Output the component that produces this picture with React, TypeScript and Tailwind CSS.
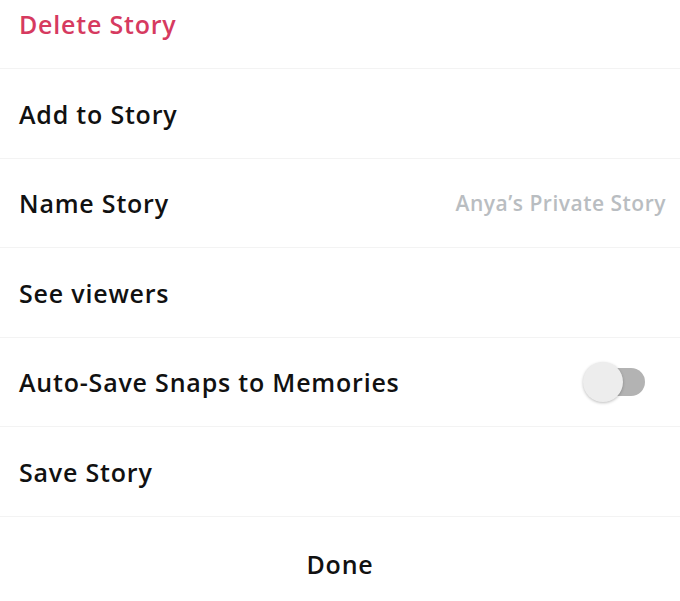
const rows = [
  { label: "Delete Story", danger: true },
  { label: "Add to Story" },
  { label: "Name Story", value: "Anya’s Private Story" },
  { label: "See viewers" },
  { label: "Auto-Save Snaps to Memories", toggle: true },
  { label: "Save Story" },
];

function Toggle() {
  return (
    <div className="relative w-[62px] h-[40px] flex items-center">
      <div className="absolute left-[6px] right-0 h-[28px] rounded-full bg-[#b3b3b3]" />
      <div className="absolute left-0 w-[40px] h-[40px] rounded-full bg-[#ededed] shadow-[0_1px_3px_rgba(0,0,0,0.25)]" />
    </div>
  );
}

export default function App() {
  return (
    <div
      className="w-[680px] h-[601px] overflow-hidden bg-white"
      style={{ fontFamily: "'Open Sans', 'Noto Sans', sans-serif" }}
    >
      <div className="-mt-[20.6px]">
        {rows.map((r) => (
          <div
            key={r.label}
            className="h-[89.6px] flex items-center justify-between pl-[19px] pr-[14px] border-b border-[#f3f3f3]"
          >
            <span
              className={`text-[25px] font-semibold tracking-[0.8px] mt-[2px] ${
                r.danger ? "text-[#d63a60]" : "text-[#111111]"
              }`}
            >
              {r.label}
            </span>
            {r.value && (
              <span className="text-[21px] font-semibold tracking-[0.5px] mt-[2px] text-[#b9bdc1]">
                {r.value}
              </span>
            )}
            {r.toggle && (
              <div className="mr-[21px]">
                <Toggle />
              </div>
            )}
          </div>
        ))}
        <div className="h-[96px] flex items-center justify-center">
          <span className="text-[25px] font-semibold tracking-[0.8px] text-[#111111]">Done</span>
        </div>
      </div>
    </div>
  );
}
